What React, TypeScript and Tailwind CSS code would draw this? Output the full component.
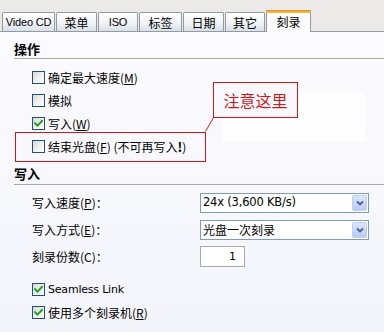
import React from "react";

const cjk = { fontFamily: '"Noto Sans CJK SC", "Liberation Sans", sans-serif' } as React.CSSProperties;

function Box({ checked }: { checked?: boolean }) {
  return (
    <div className="w-[13px] h-[13px] border border-[#1c5180] bg-gradient-to-br from-[#d8d8d2] via-[#f0f0ec] to-white flex items-center justify-center shrink-0">
      {checked && (
        <svg width="9" height="9" viewBox="0 0 9 9">
          <path d="M1 4.2 L3.4 6.6 L8 2" stroke="#21a121" strokeWidth="2" fill="none" strokeLinecap="square" />
        </svg>
      )}
    </div>
  );
}

function CheckRow({ checked, children }: { checked?: boolean; children: React.ReactNode }) {
  return (
    <div className="h-[23px] flex items-center pl-[32px] gap-[3px] text-[12px] text-black leading-none" style={cjk}>
      <Box checked={checked} />
      <span>{children}</span>
    </div>
  );
}

function Tab({ label, w, active }: { label: string; w: string; active?: boolean }) {
  if (active) {
    return (
      <div className={`${w} h-[22px] -mb-px relative z-10 bg-[#fbfbfd] border-x border-[#919b9c] flex items-center justify-center pb-[1px] text-[12px] leading-none`} style={cjk}>
        <div className="absolute left-[-1px] right-[-1px] top-0 h-[3px] rounded-t-[2px] bg-gradient-to-b from-[#e68b2c] to-[#ffc73c]" />
        <span className="mt-[2px]">{label}</span>
      </div>
    );
  }
  const latin = label === "Video CD" || label === "ISO";
  return (
    <div className={`${w} h-[19px] border border-b-0 border-[#919b9c] rounded-t-[2px] bg-gradient-to-b from-white via-[#f3f4f7] to-[#d9e0e9] flex items-center justify-center text-[12px] leading-none pt-[1px] whitespace-nowrap`} style={latin ? { fontFamily: '"Liberation Sans", Arial, sans-serif', fontSize: "11px", letterSpacing: "-0.2px" } : cjk}>
      {label}
    </div>
  );
}

function Select({ value }: { value: string }) {
  return (
    <div className="w-[169px] h-[20px] border border-[#7f9db9] bg-white flex items-center justify-between pl-[2px] pr-[1px]">
      <span className="text-[12px] leading-none" style={value.startsWith("24x") ? { fontFamily: '"DejaVu Sans", sans-serif', fontSize: "11.5px", letterSpacing: "-0.2px" } : cjk}>{value}</span>
      <div className="w-[15px] h-[16px] rounded-[2px] border border-[#bccff6] bg-gradient-to-b from-[#dbe6fd] to-[#b7cbf6] flex items-center justify-center">
        <svg width="8" height="6" viewBox="0 0 8 6">
          <path d="M1 1.5 L4 4.5 L7 1.5" stroke="#4d6185" strokeWidth="1.8" fill="none" />
        </svg>
      </div>
    </div>
  );
}

export default function App() {
  return (
    <div className="w-[384px] h-[332px] bg-[#eceae9] flex flex-col overflow-hidden relative" style={cjk}>
      <div className="h-[31px] flex items-end pl-[2px] gap-[1px] shrink-0">
        <Tab label="Video CD" w="w-[53px]" />
        <Tab label="菜单" w="w-[41px]" />
        <Tab label="ISO" w="w-[40px]" />
        <Tab label="标签" w="w-[43px]" />
        <Tab label="日期" w="w-[41px]" />
        <Tab label="其它" w="w-[40px]" />
        <Tab label="刻录" w="w-[45px]" active />
      </div>
      <div className="flex-1 border-t border-[#919b9c] bg-gradient-to-b from-[#fbfbfe] to-[#f4f5fb] pl-[14px] relative">
        <div className="mt-[10px] h-[17px] border-b border-[#aca899] flex items-start">
          <span className="text-[13px] font-bold leading-[14px]">操作</span>
        </div>
        <div className="mt-[7px] -ml-[14px]">
          <CheckRow>确定最大速度(<u>M</u>)</CheckRow>
          <CheckRow>模拟</CheckRow>
          <CheckRow checked>写入(<u>W</u>)</CheckRow>
          <div className="relative">
            <CheckRow>结束光盘(<u>F</u>) (不可再写入<b className="text-[13px]">!</b>)</CheckRow>
            <div className="absolute left-[15px] top-[-3px] w-[191px] h-[30px] border border-[#d01a1a]" />
          </div>
        </div>
        <div className="mt-[4px] h-[23px] border-b border-[#aca899] flex items-center">
          <span className="text-[13px] font-bold leading-none">写入</span>
        </div>
        <div className="-ml-[14px] pl-[32px] pr-[15px] text-[12px] leading-none">
          <div className="mt-[8px] h-[20px] flex items-center justify-between">
            <span>写入速度(<u>P</u>)：</span>
            <Select value="24x (3,600 KB/s)" />
          </div>
          <div className="mt-[7px] h-[20px] flex items-center justify-between">
            <span>写入方式(<u>E</u>)：</span>
            <Select value="光盘一次刻录" />
          </div>
          <div className="mt-[6px] h-[21px] flex items-center">
            <span className="w-[168px]">刻录份数(C)：</span>
            <div className="w-[45px] h-[21px] border border-[#a5acb5] bg-white flex items-center justify-end pr-[8px]" style={{ fontFamily: '"DejaVu Sans", sans-serif', fontSize: "11px" }}>1</div>
          </div>
        </div>
        <div className="mt-[11px] -ml-[14px]">
          <div className="h-[23px] flex items-center pl-[32px] gap-[3px] leading-none">
            <Box checked />
            <span style={{ fontFamily: '"DejaVu Sans", sans-serif', fontSize: "11px", letterSpacing: "-0.2px" }}>Seamless Link</span>
          </div>
          <CheckRow checked>使用多个刻录机(<u>R</u>)</CheckRow>
        </div>
      </div>
      <div className="absolute left-[222px] top-[93px] w-[143px] h-[49px] bg-white/70 pointer-events-none" />
      <div className="absolute left-[213px] top-[82px] w-[85px] h-[36px] border border-[#d01a1a] bg-[#f9f9fd] flex items-center justify-center text-[16px] text-[#d01a1a] leading-none">
        注意这里
      </div>
      <svg className="absolute left-0 top-0" width="384" height="332" style={{ pointerEvents: "none" }}>
        <line x1="213.5" y1="117.5" x2="205.5" y2="131.5" stroke="#d01a1a" strokeWidth="1" />
      </svg>
    </div>
  );
}
